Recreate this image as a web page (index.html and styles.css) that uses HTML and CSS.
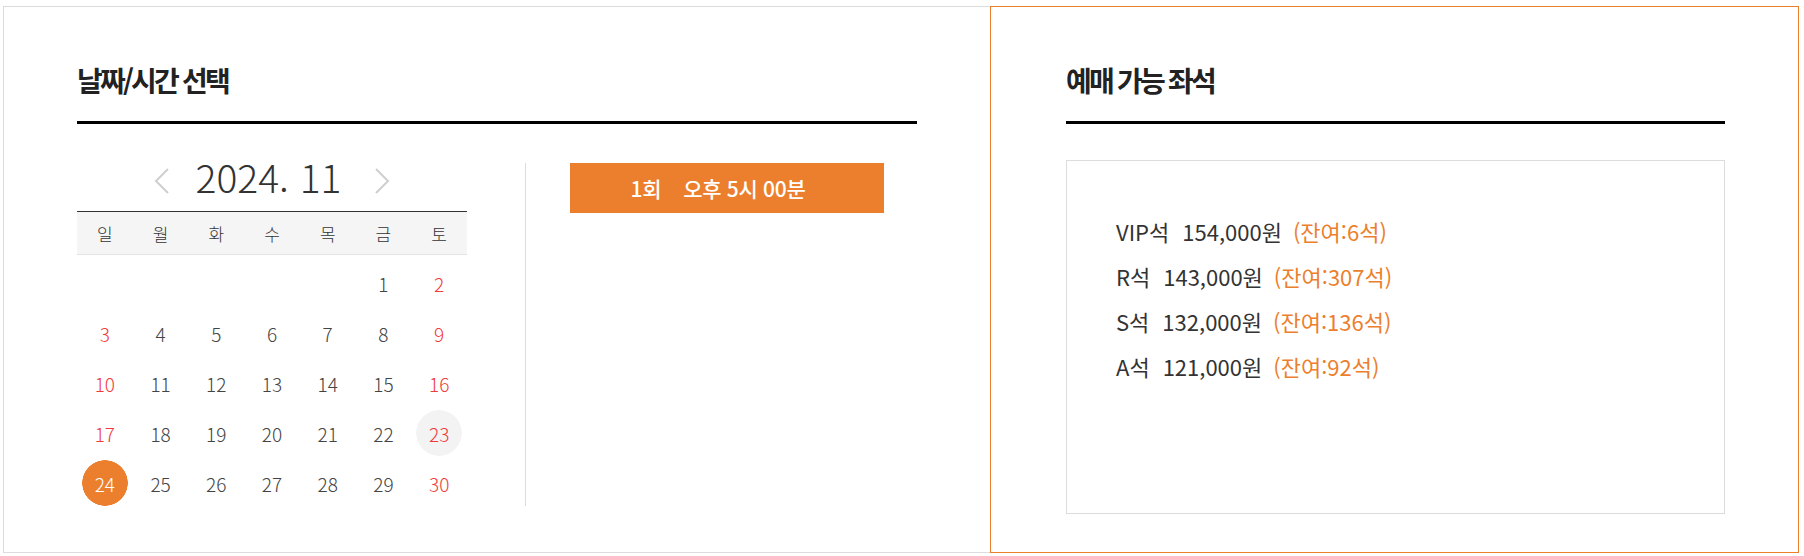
FILE: index.html
```html
<!DOCTYPE html>
<html lang="ko">
<head>
<meta charset="utf-8">
<title>예매</title>
<link rel="stylesheet" href="styles.css">
</head>
<body>
<div class="wrap">
  <section class="panel panel-date">
    <h2 class="title">날짜/시간 선택</h2>
    <div class="date-body">
      <div class="calendar">
        <div class="cal-nav">
          <svg class="chev" width="16" height="26" viewBox="0 0 16 26"><polyline points="14,1 2,13 14,25" fill="none" stroke="#cfcfcf" stroke-width="2"/></svg>
          <span class="cal-month">2024. 11</span>
          <svg class="chev" width="16" height="26" viewBox="0 0 16 26"><polyline points="2,1 14,13 2,25" fill="none" stroke="#cfcfcf" stroke-width="2"/></svg>
        </div>
        <div class="cal-week">
          <span>일</span><span>월</span><span>화</span><span>수</span><span>목</span><span>금</span><span>토</span>
        </div>
        <div class="cal-days">
          <span></span><span></span><span></span><span></span><span></span><span>1</span><span class="red">2</span>
          <span class="red">3</span><span>4</span><span>5</span><span>6</span><span>7</span><span>8</span><span class="red">9</span>
          <span class="red">10</span><span>11</span><span>12</span><span>13</span><span>14</span><span>15</span><span class="red">16</span>
          <span class="red">17</span><span>18</span><span>19</span><span>20</span><span>21</span><span>22</span><span class="red today">23</span>
          <span class="selected">24</span><span>25</span><span>26</span><span>27</span><span>28</span><span>29</span><span class="red">30</span>
        </div>
      </div>
      <div class="divider"></div>
      <div class="times">
        <button class="time-btn">1회<span class="time-val">오후 5시 00분</span></button>
      </div>
    </div>
  </section>
  <section class="panel panel-seat">
    <h2 class="title">예매 가능 좌석</h2>
    <div class="seat-box">
      <p class="seat"><span class="grade">VIP석</span><span class="price">154,000원</span><span class="left">(잔여:6석)</span></p>
      <p class="seat"><span class="grade">R석</span><span class="price">143,000원</span><span class="left">(잔여:307석)</span></p>
      <p class="seat"><span class="grade">S석</span><span class="price">132,000원</span><span class="left">(잔여:136석)</span></p>
      <p class="seat"><span class="grade">A석</span><span class="price">121,000원</span><span class="left">(잔여:92석)</span></p>
    </div>
  </section>
</div>
</body>
</html>
```

FILE: styles.css
```css
* { box-sizing: border-box; }
html, body { margin: 0; padding: 0; background: #fff; }
body {
  font-family: "Noto Sans CJK KR", "Noto Sans", sans-serif;
  color: #333;
}
.wrap {
  display: flex;
  width: 1796px;
  height: 547px;
  margin: 6px 0 0 3px;
}
.panel {
  padding-top: 59px;
}
.panel-date {
  width: 987px;
  border: 1px solid #dcdcdc;
  border-right: 0;
  padding-left: 73px;
  padding-right: 73px;
}
.panel-seat {
  width: 809px;
  border: 1px solid #ec7f2e;
  padding-left: 75px;
  padding-right: 73px;
}
.title {
  margin: 0;
  font-size: 28px;
  line-height: 28px;
  font-weight: 700;
  letter-spacing: -2.8px;
  color: #222;
  padding-bottom: 27px;
  border-bottom: 3px solid #000;
}
.date-body {
  display: flex;
  align-items: flex-start;
  margin-top: 39px;
}
.calendar {
  width: 390px;
  margin-right: 58px;
}
.cal-nav {
  display: flex;
  justify-content: center;
  align-items: flex-start;
  height: 48px;
}
.chev { margin-top: 5px; display: block; }
.cal-month {
  font-size: 39px;
  line-height: 27px;
  font-weight: 300;
  color: #333;
  margin: 0 33px 0 26px;
}
.cal-week {
  display: grid;
  grid-template-columns: repeat(7, 1fr);
  height: 44px;
  border-top: 1px solid #333;
  border-bottom: 1px solid #e4e4e4;
  background: #f5f5f5;
}
.cal-week span {
  display: flex;
  align-items: center;
  justify-content: center;
  font-size: 17px;
  font-weight: 300;
  color: #333;
}
.cal-days {
  display: grid;
  grid-template-columns: repeat(7, 1fr);
  grid-auto-rows: 50px;
  margin-top: 3px;
}
.cal-days span {
  display: flex;
  align-items: center;
  justify-content: center;
  font-size: 19px;
  font-weight: 300;
  color: #444;
}
.cal-days span.red { color: #ef3b3b; }
.cal-days span.today {
  background: radial-gradient(circle at center, #f3f3f3 22.5px, transparent 23px);
}
.cal-days span.selected {
  color: #fff;
  background: radial-gradient(circle at center, #ec7f2e 22.5px, transparent 23px);
}
.divider {
  width: 1px;
  height: 343px;
  background: #dcdcdc;
}
.times {
  padding-left: 44px;
}
.time-btn {
  display: block;
  width: 314px;
  height: 50px;
  border: 0;
  margin: 0;
  padding: 0 18px 0 0;
  background: #ec7f2e;
  color: #fff;
  font-family: "Noto Sans CJK KR", "Noto Sans", sans-serif;
  font-size: 21px;
  font-weight: 500;
  letter-spacing: -0.3px;
  text-align: center;
  line-height: 50px;
}
.time-val { margin-left: 22px; }
.seat-box {
  margin-top: 36px;
  height: 354px;
  border: 1px solid #dcdcdc;
  padding: 48px 0 0 49px;
}
.seat {
  margin: 0;
  font-size: 22px;
  line-height: 45px;
  font-weight: 400;
  color: #333;
  white-space: nowrap;
}
.grade { margin-right: 13px; }
.price { margin-right: 11px; }
.left { color: #ec7f2e; }
```
